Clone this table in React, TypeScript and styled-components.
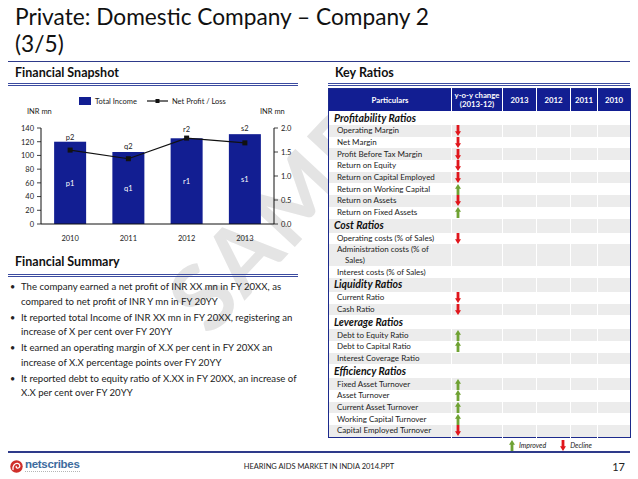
import React from 'react';
import styled, { createGlobalStyle } from 'styled-components';

const BLUE = '#121e92';
const RULE = '#2e3a8a';
const RED = '#e0161c';
const GREEN = '#6fa233';

const GlobalStyle = createGlobalStyle`
  html, body { margin: 0; padding: 0; background: #fff; }
  body { font-family: Lato, "Open Sans", sans-serif; color: #111; }
`;

type Trend = 'up' | 'down';

interface RatioRow {
  label: string;
  trend?: Trend;
}

interface RatioGroup {
  title: string;
  rows: RatioRow[];
}

const groups: RatioGroup[] = [
  {
    title: 'Profitability Ratios',
    rows: [
      { label: 'Operating Margin', trend: 'down' },
      { label: 'Net Margin', trend: 'down' },
      { label: 'Profit Before Tax Margin', trend: 'down' },
      { label: 'Return on Equity', trend: 'down' },
      { label: 'Return on Capital Employed', trend: 'down' },
      { label: 'Return on Working Capital', trend: 'up' },
      { label: 'Return on Assets', trend: 'down' },
      { label: 'Return on Fixed Assets', trend: 'up' }
    ]
  },
  {
    title: 'Cost Ratios',
    rows: [
      { label: 'Operating costs (% of Sales)', trend: 'down' },
      { label: 'Administration costs (% of\nSales)' },
      { label: 'Interest costs (% of Sales)' }
    ]
  },
  {
    title: 'Liquidity Ratios',
    rows: [
      { label: 'Current Ratio', trend: 'down' },
      { label: 'Cash Ratio', trend: 'down' }
    ]
  },
  {
    title: 'Leverage Ratios',
    rows: [
      { label: 'Debt to Equity Ratio', trend: 'up' },
      { label: 'Debt to Capital Ratio', trend: 'up' },
      { label: 'Interest Coverage Ratio' }
    ]
  },
  {
    title: 'Efficiency Ratios',
    rows: [
      { label: 'Fixed Asset Turnover', trend: 'up' },
      { label: 'Asset Turnover', trend: 'up' },
      { label: 'Current Asset Turnover', trend: 'up' },
      { label: 'Working Capital Turnover', trend: 'up' },
      { label: 'Capital Employed Turnover', trend: 'down' }
    ]
  }
];

const columns = [
  { title: 'Particulars', width: 123 },
  { title: 'y-o-y change\n(2013-12)', width: 51 },
  { title: '2013', width: 34 },
  { title: '2012', width: 34 },
  { title: '2011', width: 27 },
  { title: '2010', width: 33 }
];

const years = [
  { year: '2010', income: 120, profit: 1.54, top: 'p2', topY: 137, inner: 'p1' },
  { year: '2011', income: 105, profit: 1.36, top: 'q2', topY: 145.5, inner: 'q1' },
  { year: '2012', income: 125, profit: 1.79, top: 'r2', topY: 128.5, inner: 'r1' },
  { year: '2013', income: 131, profit: 1.69, top: 's2', topY: 128, inner: 's1' }
];

const summary = [
  'The company earned a net profit of INR XX mn in FY 20XX, as compared to net profit of INR Y mn in FY 20YY',
  'It reported total Income of  INR XX mn in FY 20XX, registering an increase of X per cent over FY 20YY',
  'It earned an operating margin of X.X per cent in FY 20XX an increase of X.X percentage points over FY 20YY',
  'It reported debt to equity ratio of X.XX in FY 20XX, an increase of X.X per cent over FY 20YY'
];

// chart geometry, in page pixels
const X0 = 41;
const X1 = 274;
const Y0 = 224;
const YT = 128;
const slot = (X1 - X0) / 4;
const cx = (i: number) => X0 + slot * (i + 0.5);
const yLeft = (v: number) => Y0 - (v / 140) * (Y0 - YT);
const yRight = (v: number) => Y0 - (v / 2) * (Y0 - YT);

const Arrow: React.FC<{ trend: Trend }> = ({ trend }) => (
  <svg width="6" height="11" viewBox="0 0 6 11">
    {trend === 'down' ? (
      <path d="M1.6 0 H4.4 V6.2 H6 L3 11 L0 6.2 H1.6 Z" fill={RED} />
    ) : (
      <path d="M1.6 11 H4.4 V4.8 H6 L3 0 L0 4.8 H1.6 Z" fill={GREEN} />
    )}
  </svg>
);

const Chart: React.FC = () => {
  const line = years.map((y, i) => `${cx(i)},${yRight(y.profit)}`).join(' ');
  return (
    <ChartSvg width="290" height="162" viewBox="8 86 290 162">
      <rect x="79" y="97" width="12" height="8" fill={BLUE} />
      <text x="95" y="104">Total Income</text>
      <line x1="147" y1="101" x2="168" y2="101" stroke="#111" strokeWidth="1.2" />
      <rect x="155.5" y="99" width="4" height="4" fill="#111" />
      <text x="172" y="104">Net Profit / Loss</text>

      <text x="27" y="114">INR mn</text>
      <text x="260" y="114">INR mn</text>

      {[0, 20, 40, 60, 80, 100, 120, 140].map(v => (
        <g key={v}>
          <line x1="37" y1={yLeft(v)} x2={X0} y2={yLeft(v)} stroke="#111" strokeWidth="0.8" />
          <text x="34" y={yLeft(v) + 2.8} textAnchor="end">{v}</text>
        </g>
      ))}
      {[0, 0.5, 1, 1.5, 2].map(v => (
        <g key={v}>
          <line x1={X1} y1={yRight(v)} x2={X1 + 4} y2={yRight(v)} stroke="#111" strokeWidth="0.8" />
          <text x="281" y={yRight(v) + 2.8}>{v.toFixed(1)}</text>
        </g>
      ))}

      {years.map((y, i) => (
        <g key={y.year}>
          <rect x={cx(i) - 16} y={yLeft(y.income)} width="32" height={Y0 - yLeft(y.income)} fill={BLUE} />
          <text x={cx(i)} y={y.topY + 3} textAnchor="middle">{y.top}</text>
          <text x={cx(i)} y={(yLeft(y.income) + Y0) / 2 + 3} textAnchor="middle" fill="#fff">{y.inner}</text>
          <text x={cx(i)} y="241" textAnchor="middle">{y.year}</text>
        </g>
      ))}

      <line x1={X0} y1={YT} x2={X0} y2={Y0} stroke="#111" strokeWidth="1" />
      <line x1={X1} y1={YT} x2={X1} y2={Y0} stroke="#111" strokeWidth="1" />
      <line x1={X0} y1={Y0} x2={X1} y2={Y0} stroke="#111" strokeWidth="1" />

      <polyline points={line} fill="none" stroke="#111" strokeWidth="1.2" />
      {years.map((y, i) => (
        <rect key={y.year} x={cx(i) - 2.5} y={yRight(y.profit) - 2.5} width="5" height="5" fill="#111" />
      ))}
    </ChartSvg>
  );
};

const Logo: React.FC = () => (
  <LogoWrap>
    <svg width="13" height="13" viewBox="0 0 13 13">
      <circle cx="6.5" cy="6.5" r="6.2" fill="#cf2f2a" />
      <path d="M3 9.5 C2.5 5.5 5 3 7.5 3.4 C10 3.8 10.6 6.6 8.8 7.8 C7.4 8.7 5.8 7.8 6.2 6.4" fill="none" stroke="#fff" strokeWidth="1.3" strokeLinecap="round" />
    </svg>
    <LogoText>
      <LogoName>netscribes</LogoName>
      <LogoTag />
    </LogoText>
  </LogoWrap>
);

export default function App() {
  let stripe = 0;
  return (
    <>
      <GlobalStyle />
      <Page>
        <Watermark width="638" height="479" viewBox="0 0 638 479">
          <text x="210" y="338" transform="rotate(-47 210 338)">SAMPLE</text>
        </Watermark>
        <Header>
          <Title>
            Private: Domestic Company – Company 2
            <br />
            (3/5)
          </Title>
        </Header>

        <Main>
          <Column>
            <Heading>Financial Snapshot</Heading>
            <Chart />
            <Heading $tall>Financial Summary</Heading>
            <Bullets>
              {summary.map(s => (
                <li key={s}>{s}</li>
              ))}
            </Bullets>
          </Column>

          <Column $opaque>
            <Heading>Key Ratios</Heading>
            <Table>
              <colgroup>
                {columns.map(c => (
                  <Col key={c.title} $w={c.width} />
                ))}
              </colgroup>
              <thead>
                <tr>
                  {columns.map(c => (
                    <Th key={c.title}>{c.title}</Th>
                  ))}
                </tr>
              </thead>
              <tbody>
                {groups.map(g => {
                  const groupShade = stripe++ % 2 === 1;
                  return (
                    <React.Fragment key={g.title}>
                      <tr>
                        <GroupCell $shade={groupShade}>{g.title}</GroupCell>
                        {columns.slice(1).map(c => (
                          <Td key={c.title} $shade={groupShade} />
                        ))}
                      </tr>
                      {g.rows.map(r => {
                        const shade = stripe++ % 2 === 1;
                        return (
                          <tr key={r.label}>
                            <LabelCell $shade={shade}>{r.label}</LabelCell>
                            <TrendCell $shade={shade}>{r.trend && <Arrow trend={r.trend} />}</TrendCell>
                            {columns.slice(2).map(c => (
                              <Td key={c.title} $shade={shade} />
                            ))}
                          </tr>
                        );
                      })}
                    </React.Fragment>
                  );
                })}
              </tbody>
            </Table>
            <Legend>
              <Arrow trend="up" />
              <LegendLabel>Improved</LegendLabel>
              <Arrow trend="down" />
              <LegendLabel>Decline</LegendLabel>
            </Legend>
          </Column>
        </Main>

        <Footer>
          <Logo />
          <FooterTitle>HEARING AIDS MARKET IN INDIA 2014.PPT</FooterTitle>
          <PageNo>17</PageNo>
        </Footer>
      </Page>
    </>
  );
}

const Page = styled.div`
  position: relative;
  width: 638px;
  height: 479px;
  padding: 0 8px;
  box-sizing: border-box;
  overflow: hidden;
  display: flex;
  flex-direction: column;
`;

const Watermark = styled.svg`
  position: absolute;
  left: 0;
  top: 0;
  z-index: 0;
  pointer-events: none;
  font-family: Lato, sans-serif;
  font-size: 92px;
  font-weight: 700;
  letter-spacing: 2px;
  fill: #e4e4e4;
`;

const Header = styled.div`
  position: relative;
  z-index: 1;
  height: 62px;
  box-sizing: border-box;
  padding: 3px 0 0 7px;
  background: #fff;
  border-bottom: 1.5px solid ${RULE};
`;

const Title = styled.h1`
  margin: 0;
  font-size: 22.7px;
  font-weight: 400;
  line-height: 27px;
  color: #111;
`;

const Main = styled.div`
  position: relative;
  z-index: 1;
  height: 389px;
  display: grid;
  grid-template-columns: 290px 302px;
  column-gap: 30px;
`;

const Column = styled.div<{ $opaque?: boolean }>`
  display: flex;
  flex-direction: column;
  background: ${p => (p.$opaque ? '#fff' : 'transparent')};
`;

const Heading = styled.h2<{ $tall?: boolean }>`
  margin: 0;
  height: ${p => (p.$tall ? 29 : 24)}px;
  box-sizing: border-box;
  padding: ${p => (p.$tall ? 6 : 3)}px 0 0 7px;
  font-size: 12.5px;
  font-weight: 700;
  line-height: 15px;
  color: #111;
  border-bottom: 3px double #3b4ba0;
`;

const ChartSvg = styled.svg`
  display: block;
  font-family: Lato, sans-serif;
  font-size: 7.5px;
  fill: #222;
`;

const Bullets = styled.ul`
  margin: 0;
  padding: 3px 0 0 13px;
  list-style: none;
  font-size: 9.6px;
  line-height: 14.5px;
  color: #222;

  li {
    position: relative;
    margin-bottom: 1.5px;
  }

  li::before {
    content: '•';
    position: absolute;
    left: -11px;
    top: 0;
    font-size: 9px;
  }
`;

const Table = styled.table`
  margin-top: 2px;
  width: 302px;
  table-layout: fixed;
  border-collapse: collapse;
  border: 1px solid #1c2a8c;
  background: #fff;
  font-size: 8px;
  color: #222;
`;

const Col = styled.col<{ $w: number }>`
  width: ${p => p.$w}px;
`;

const Th = styled.th`
  height: 22px;
  padding: 0;
  background: ${BLUE};
  color: #fff;
  font-size: 7.8px;
  font-weight: 700;
  line-height: 9px;
  text-align: center;
  white-space: pre-line;
  border-left: 1px solid #fff;
  &:first-child { border-left: none; }
`;

const Td = styled.td<{ $shade: boolean }>`
  padding: 0;
  height: 11.7px;
  background: ${p => (p.$shade ? '#ececec' : '#fff')};
  border-left: 1px solid #fff;
`;

const GroupCell = styled(Td)`
  height: 14px;
  padding-left: 5px;
  font-size: 10.5px;
  font-weight: 700;
  font-style: italic;
  line-height: 13px;
  color: #111;
  white-space: nowrap;
  border-left: none;
`;

const LabelCell = styled(Td)`
  padding: 0 0 0 16px;
  text-indent: -8px;
  line-height: 11px;
  white-space: pre-line;
  border-left: none;
`;

const TrendCell = styled(Td)`
  padding-left: 3px;
  vertical-align: middle;

  svg {
    display: block;
  }
`;

const Legend = styled.div`
  display: flex;
  align-items: center;
  gap: 4px;
  height: 15px;
  padding-left: 181px;
`;

const LegendLabel = styled.span`
  font-size: 7px;
  font-style: italic;
  color: #222;
  margin-right: 10px;
`;

const Footer = styled.div`
  position: relative;
  z-index: 1;
  flex: 1;
  display: grid;
  grid-template-columns: 1fr auto 1fr;
  align-items: center;
  border-top: 2px solid ${RULE};
`;

const LogoWrap = styled.div`
  display: flex;
  align-items: center;
  gap: 2px;
  padding-left: 2px;
`;

const LogoText = styled.div`
  display: flex;
  flex-direction: column;
`;

const LogoName = styled.span`
  font-family: "Liberation Sans", Arial, sans-serif;
  font-size: 11.5px;
  font-weight: 700;
  letter-spacing: -0.3px;
  line-height: 11px;
  color: #3d6b9e;
`;

const LogoTag = styled.span`
  height: 2px;
  margin-top: 1px;
  border-top: 1px dotted #b5b5b5;
`;

const FooterTitle = styled.span`
  font-size: 7.5px;
  color: #222;
`;

const PageNo = styled.span`
  justify-self: end;
  padding-right: 5px;
  font-size: 11px;
  color: #222;
`;
